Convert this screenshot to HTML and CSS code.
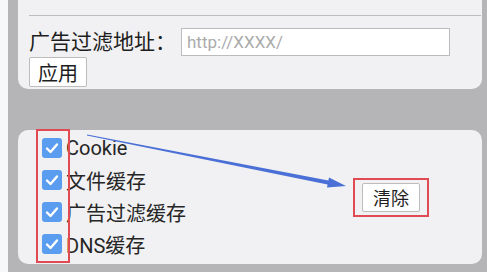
FILE: index.html
```html
<!DOCTYPE html>
<html lang="zh-CN">
<head>
    <meta charset="UTF-8">
    <meta name="viewport" content="width=device-width, initial-scale=1.0">
    <title>浏览器设置</title>
    <link rel="stylesheet" href="styles.css">
</head>
<body>

<div class="page">
    <div class="edge"></div>

    <main class="panel">
        <section class="card card-filter">
            <div class="card-title">开启广告过滤功能</div>
            <div class="filter-row">
                <label for="filterUrl">广告过滤地址：</label>
                <input type="text" id="filterUrl" placeholder="http://XXXX/">
            </div>
            <button type="button" class="btn">应用</button>
        </section>

        <section class="card card-cache">
            <ul class="cache-list">
                <li><span class="check"><svg viewBox="0 0 20 20"><polyline points="5,10.5 8.5,14 15,6.5"/></svg></span>Cookie</li>
                <li><span class="check"><svg viewBox="0 0 20 20"><polyline points="5,10.5 8.5,14 15,6.5"/></svg></span>文件缓存</li>
                <li><span class="check"><svg viewBox="0 0 20 20"><polyline points="5,10.5 8.5,14 15,6.5"/></svg></span>广告过滤缓存</li>
                <li><span class="check"><svg viewBox="0 0 20 20"><polyline points="5,10.5 8.5,14 15,6.5"/></svg></span>DNS缓存</li>
            </ul>
            <div class="clear-box">
                <button type="button" class="btn btn-clear">清除</button>
            </div>
        </section>
    </main>

    <!-- annotation marks drawn over the screenshot -->
    <svg class="marks" viewBox="0 0 487 272">
        <rect x="37" y="130" width="32" height="132" fill="none" stroke="#e04a52" stroke-width="2"/>
        <polygon fill="#4a6fd6" points="87,134.4 328.4,180.5 329,177.6 346,186 327,187.4 327.6,184.5 87,135.6"/>
    </svg>
</div>

</body>
</html>
```

FILE: styles.css
```css
body {
    margin: 0;
    font-family: Roboto, "Noto Sans CJK SC", sans-serif;
    color: #262626;
}

.page {
    position: relative;
    display: flex;
    width: 487px;
    height: 272px;
    overflow: hidden;
}

.edge {
    width: 8px;
    background-color: #f7f8fa;
}

.panel {
    flex: 1;
    display: flex;
    flex-direction: column;
    padding: 0 5px 0 10px;
    background-color: #b5b4b6;
}

.card {
    background-color: #f1f1f3;
    border-radius: 10px;
}

.card-filter {
    margin-top: -40px;
    padding: 0 1px 2px 11px;
}

.card-title {
    height: 56px;
    box-sizing: border-box;
    padding: 21px 0 0 31px;
    font-size: 20px;
    line-height: 20px;
    border-bottom: 1px solid #bdbdbf;
}

.filter-row {
    display: flex;
    align-items: center;
    margin-top: 12px;
    height: 28px;
}

.filter-row label {
    font-size: 21px;
    line-height: 28px;
    width: 152px;
    white-space: nowrap;
    color: #1e1e1e;
}

.filter-row input {
    width: 269px;
    height: 28px;
    box-sizing: border-box;
    border: 1px solid #bcbcbc;
    background-color: #ffffff;
    padding: 0 5px;
    font-family: Roboto, sans-serif;
    font-size: 17px;
}

.filter-row input::placeholder {
    color: #ababab;
}

.btn {
    display: block;
    width: 58px;
    height: 30px;
    margin-top: 1px;
    padding: 0;
    background-color: #ffffff;
    border: 1px solid #bcbcbc;
    border-radius: 2px;
    font-family: "Noto Sans CJK SC", sans-serif;
    font-size: 20px;
    color: #1e1e1e;
}

.card-cache {
    display: flex;
    margin-top: 41px;
    height: 134px;
}

.cache-list {
    list-style: none;
    margin: 0;
    padding: 2px 0 0 24px;
}

.cache-list li {
    display: flex;
    align-items: center;
    height: 32px;
    font-size: 20px;
}

.check {
    width: 20px;
    height: 20px;
    margin-right: 4px;
    border-radius: 3px;
    background-color: #5a9cf0;
}

.check svg {
    display: block;
    width: 20px;
    height: 20px;
    fill: none;
    stroke: #ffffff;
    stroke-width: 2.4;
    stroke-linecap: round;
    stroke-linejoin: round;
}

.clear-box {
    align-self: center;
    margin: 0 53px 0 auto;
    padding: 3px 7px;
    border: 2px solid #e04a52;
}

.btn-clear {
    height: 29px;
    margin-top: 0;
    font-size: 18px;
}

.marks {
    position: absolute;
    left: 0;
    top: 0;
    width: 487px;
    height: 272px;
    pointer-events: none;
}
```
